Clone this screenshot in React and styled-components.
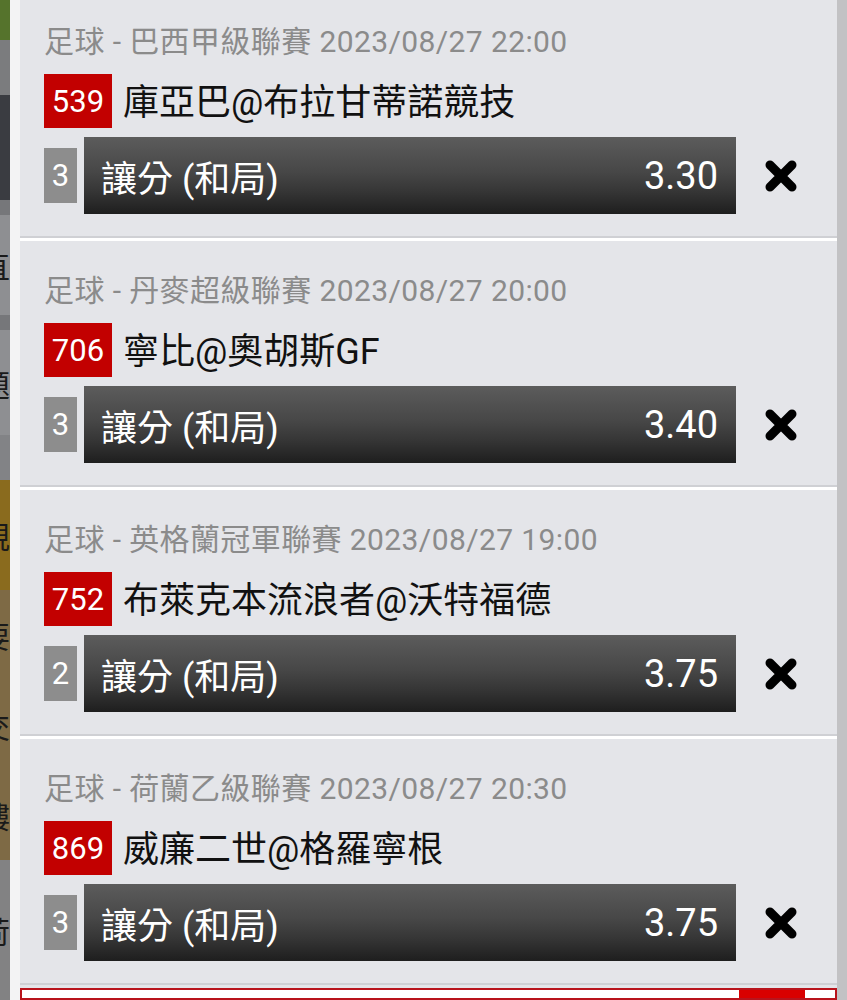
import React from 'react'
import styled, { createGlobalStyle } from 'styled-components'

const GlobalStyle = createGlobalStyle`
  html, body {
    margin: 0;
    padding: 0;
    height: 1000px;
    overflow: hidden;
    background: #c4c4c4;
  }
  * { box-sizing: border-box; }
`

const FONT = `Roboto, "Noto Sans CJK TC", "Noto Sans", sans-serif`

const Screen = styled.div`
  display: flex;
  width: 847px;
  height: 1000px;
  overflow: hidden;
  font-family: ${FONT};
`

const Backdrop = styled.div`
  width: 10px;
  display: flex;
  flex-direction: column;
  overflow: hidden;
`

const BackBlock = styled.div`
  height: ${p => p.h}px;
  background: ${p => p.bg};
  display: flex;
  justify-content: flex-end;
  align-items: center;
  overflow: hidden;
  font-size: 30px;
  color: #1a1a1a;
  white-space: nowrap;
`

const Gutter = styled.div`
  width: 10px;
  background: #f3f3f4;
`

const Panel = styled.div`
  width: 817px;
  background: #e4e5e9;
  display: flex;
  flex-direction: column;
`

const ScrollBar = styled.div`
  flex: 1;
  background: #c2c2c4;
`

const Card = styled.div`
  border-top: 3px solid #ffffff;
  border-bottom: 2px solid #cfd0d4;
  padding: 30px 11px 22px 24px;

  &:first-child {
    border-top: 0;
    padding-top: 22px;
  }
`

const League = styled.div`
  height: 40px;
  line-height: 40px;
  font-size: 30px;
  letter-spacing: 0.4px;
  color: #8b8b8b;
  white-space: nowrap;
`

const MatchRow = styled.div`
  margin-top: 12px;
  height: 54px;
  display: flex;
  align-items: center;
`

const Badge = styled.div`
  width: 68px;
  height: 54px;
  background: #c20000;
  color: #fff;
  font-size: 31px;
  display: flex;
  align-items: center;
  justify-content: center;
`

const Teams = styled.div`
  margin-left: 11px;
  margin-top: -4px;
  font-size: 36px;
  color: #111;
  white-space: nowrap;
`

const BetRow = styled.div`
  margin-top: 9px;
  height: 77px;
  display: flex;
  align-items: center;
`

const Count = styled.div`
  width: 33px;
  height: 55px;
  background: #8d8d8d;
  color: #fff;
  font-size: 31px;
  display: flex;
  align-items: center;
  justify-content: center;
`

const Bar = styled.div`
  flex: 1;
  height: 77px;
  margin-left: 7px;
  padding: 0 18px 0 17px;
  display: flex;
  align-items: center;
  justify-content: space-between;
  color: #fff;
  background: linear-gradient(#5c5c5c 0%, #474747 45%, #363636 70%, #1e1e1e 100%);
`

const BetName = styled.span`
  font-size: 36px;
`

const Odds = styled.span`
  font-size: 38px;
`

const CloseCell = styled.div`
  width: 90px;
  display: flex;
  align-items: center;
  justify-content: center;
`

const Footer = styled.div`
  margin-top: 3px;
  height: 40px;
  background: #fff;
  border: 2px solid #b8141c;
  display: flex;
  justify-content: flex-end;
  padding-right: 30px;
`

const FooterButton = styled.div`
  width: 66px;
  background: #d90000;
`

const CloseIcon = () => (
  <svg width="36" height="36" viewBox="0 0 36 36">
    <path
      d="M7 7 L29 29 M29 7 L7 29"
      stroke="#000"
      strokeWidth="9"
      strokeLinecap="round"
    />
  </svg>
)

const backdrop = [
  { h: 40, bg: '#55732c', t: '' },
  { h: 55, bg: '#7b7c7e', t: '' },
  { h: 105, bg: '#3a3c41', t: '' },
  { h: 15, bg: '#76777a', t: '' },
  { h: 100, bg: '#8e8f92', t: '直' },
  { h: 15, bg: '#76777a', t: '' },
  { h: 105, bg: '#8e8f92', t: '題' },
  { h: 45, bg: '#828386', t: '' },
  { h: 110, bg: '#8a6b1e', t: '規' },
  { h: 90, bg: '#7e6a45', t: '要' },
  { h: 90, bg: '#7e6a45', t: '交' },
  { h: 90, bg: '#7e6a45', t: '樓' },
  { h: 140, bg: '#828283', t: '荷' },
]

const bets = [
  { league: '足球 - 巴西甲級聯賽 2023/08/27 22:00', id: '539', teams: '庫亞巴@布拉甘蒂諾競技', count: 3, name: '讓分 (和局)', odds: '3.30' },
  { league: '足球 - 丹麥超級聯賽 2023/08/27 20:00', id: '706', teams: '寧比@奧胡斯GF', count: 3, name: '讓分 (和局)', odds: '3.40' },
  { league: '足球 - 英格蘭冠軍聯賽 2023/08/27 19:00', id: '752', teams: '布萊克本流浪者@沃特福德', count: 2, name: '讓分 (和局)', odds: '3.75' },
  { league: '足球 - 荷蘭乙級聯賽 2023/08/27 20:30', id: '869', teams: '威廉二世@格羅寧根', count: 3, name: '讓分 (和局)', odds: '3.75' },
]

export default function App() {
  return (
    <>
      <GlobalStyle />
      <Screen>
        <Backdrop>
          {backdrop.map((b, i) => (
            <BackBlock key={i} h={b.h} bg={b.bg}>{b.t}</BackBlock>
          ))}
        </Backdrop>
        <Gutter />
        <Panel>
          {bets.map(b => (
            <Card key={b.id}>
              <League>{b.league}</League>
              <MatchRow>
                <Badge>{b.id}</Badge>
                <Teams>{b.teams}</Teams>
              </MatchRow>
              <BetRow>
                <Count>{b.count}</Count>
                <Bar>
                  <BetName>{b.name}</BetName>
                  <Odds>{b.odds}</Odds>
                </Bar>
                <CloseCell><CloseIcon /></CloseCell>
              </BetRow>
            </Card>
          ))}
          <Footer>
            <FooterButton />
          </Footer>
        </Panel>
        <ScrollBar />
      </Screen>
    </>
  )
}
